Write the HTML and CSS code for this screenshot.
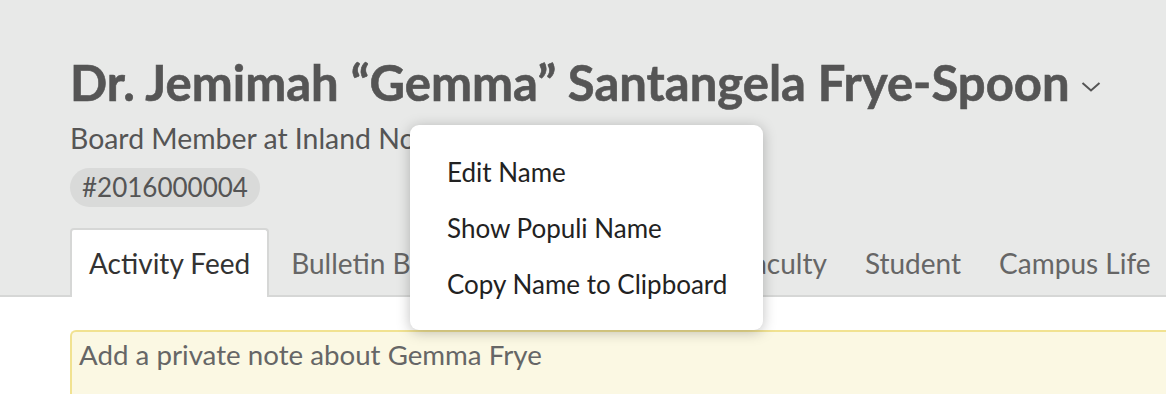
FILE: index.html
```html
<!DOCTYPE html>
<html lang="en">
<head>
  <meta charset="UTF-8">
  <title>Gemma Frye</title>
  <link rel="stylesheet" href="styles.css">
</head>
<body>
<div id="profile">
  <div class="head">
    <h1 class="name">Dr. Jemimah “Gemma” Santangela Frye-Spoon<span class="caret"><svg width="20" height="12" viewBox="0 0 20 12"><path d="M1.5 2 L10 9.5 L18.5 2" fill="none" stroke="#555" stroke-width="2"/></svg></span></h1>
    <div class="role">Board Member at Inland Northwest University</div>
    <div class="badge">#2016000004</div>
    <ul class="tabs">
      <li class="select">Activity Feed</li>
      <li>Bulletin Board</li>
      <li>Alumni</li>
      <li>Board</li>
      <li>Faculty</li>
      <li>Student</li>
      <li>Campus Life</li>
    </ul>
  </div>
  <div class="body">
    <div class="note">Add a private note about Gemma Frye</div>
  </div>

  <div class="menu">
    <a href="#">Edit Name</a>
    <a href="#">Show Populi Name</a>
    <a href="#">Copy Name to Clipboard</a>
  </div>
</div>
</body>
</html>
```

FILE: styles.css
```css
* {
  margin: 0;
  padding: 0;
}

body {
  font-family: Lato, "Open Sans", sans-serif;
  color: #555;
  overflow: hidden;
}

#profile {
  position: relative;
  width: 1166px;
  height: 394px;
  overflow: hidden;
}

.head {
  background-color: #e8e9e8;
  border-bottom: 2px solid #d6d7d6;
  padding: 44px 0 0 70px;
  height: 251px;
}

.name {
  font-size: 49px;
  font-weight: 700;
  line-height: 60px;
  white-space: nowrap;
  color: #555;
  -webkit-text-stroke: 0.6px #555;
}

.caret {
  display: inline-block;
  margin-left: 11px;
  vertical-align: 8px;
}

.role {
  margin-top: 9px;
  font-size: 28.4px;
  line-height: 34px;
  white-space: nowrap;
}

.badge {
  display: inline-block;
  margin-top: 13px;
  height: 39px;
  line-height: 39px;
  padding: 0 12px;
  border-radius: 20px;
  background-color: #d9dad9;
  font-size: 26px;
}

.tabs {
  list-style: none;
  display: flex;
  margin-top: 21px;
  white-space: nowrap;
}

.tabs li {
  height: 65px;
  line-height: 66px;
  padding: 0 17px;
  font-size: 28px;
  color: #666;
  border: 2px solid transparent;
  border-bottom: none;
}

.tabs li.select {
  background-color: #fff;
  color: #333;
  border-color: #d6d7d6;
  border-radius: 4px 4px 0 0;
  height: 67px;
  margin-right: 3px;
  margin-bottom: -2px;
}

.body {
  padding: 33px 0 0 70px;
}

.note {
  height: 80px;
  background-color: #fbf8e3;
  border: 2px solid #f1e291;
  border-right: none;
  border-radius: 6px 0 0 0;
  padding: 6px 0 0 7px;
  font-size: 27.7px;
  line-height: 34px;
  color: #666;
  white-space: nowrap;
}

.menu {
  position: absolute;
  left: 410px;
  top: 125px;
  width: 353px;
  height: 205px;
  box-sizing: border-box;
  padding: 27px 0 0 37px;
  background-color: #fff;
  border-radius: 9px;
  box-shadow: 0 2px 14px rgba(0, 0, 0, 0.25);
}

.menu a {
  display: block;
  height: 56px;
  line-height: 40px;
  font-size: 26px;
  color: #222;
  text-decoration: none;
}
```
